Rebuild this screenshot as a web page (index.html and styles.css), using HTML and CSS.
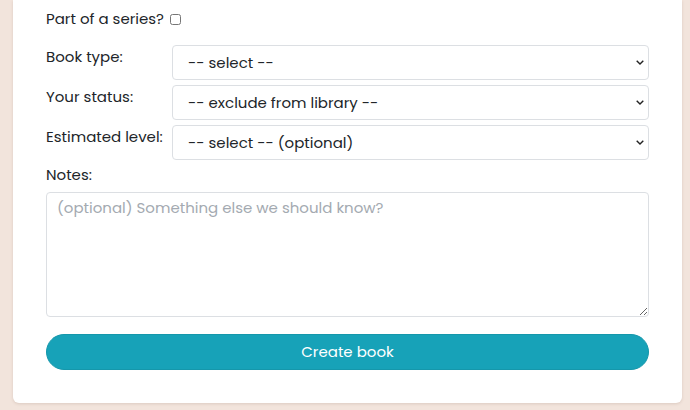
FILE: index.html
```html
<!DOCTYPE html>
<html lang="en">
<head>
    <meta charset="UTF-8">
    <meta name="viewport" content="width=device-width, initial-scale=1.0">
    <title>New book</title>
    <link rel="stylesheet" href="styles.css">
</head>
<body>
    <div class="page">
        <form class="book-card">
            <label class="series-row">
                Part of a series?
                <input type="checkbox" class="series-check">
            </label>

            <div class="field-grid">
                <label class="field-label" for="book-type">Book type:</label>
                <select id="book-type" class="form-select">
                    <option>-- select --</option>
                </select>

                <label class="field-label" for="status">Your status:</label>
                <select id="status" class="form-select">
                    <option>-- exclude from library --</option>
                </select>

                <label class="field-label" for="level">Estimated level:</label>
                <select id="level" class="form-select">
                    <option>-- select -- (optional)</option>
                </select>
            </div>

            <label class="notes-label" for="notes">Notes:</label>
            <textarea id="notes" class="form-textarea" placeholder="(optional) Something else we should know?"></textarea>

            <button type="submit" class="btn-create">Create book</button>
        </form>
    </div>
</body>
</html>
```

FILE: styles.css
```css
:root {
    --page-bg: #f2e4dc;
    --card-bg: #ffffff;
    --text-color: #212529;
    --border-color: #dcdfe3;
    --accent: #17a2b8;
}

* {
    margin: 0;
    padding: 0;
    box-sizing: border-box;
}

body {
    background: var(--page-bg);
    font-family: Poppins, "Open Sans", "Noto Sans", sans-serif;
    font-size: 15px;
    line-height: 24px;
    color: var(--text-color);
}

.page {
    padding: 0 8px 7px 13px;
}

.book-card {
    background: var(--card-bg);
    border-radius: 0 0 6px 6px;
    box-shadow: 0 1px 3px rgba(120, 90, 70, 0.18);
    padding: 7px 33px 33px;
    display: flex;
    flex-direction: column;
}

.series-row {
    display: flex;
    align-items: center;
    gap: 6px;
    margin-bottom: 14px;
}

.series-check {
    width: 11px;
    height: 11px;
    margin: 1px 0 0;
}

.field-grid {
    display: grid;
    grid-template-columns: 126px 1fr;
    row-gap: 5px;
}

.field-label {
    white-space: nowrap;
}

/* small dark chevron on the right, like the browser default */
.form-select {
    appearance: none;
    height: 35px;
    padding: 0 24px 0 15px;
    border: 1px solid var(--border-color);
    border-radius: 4px;
    background: var(--card-bg) url("data:image/svg+xml,%3Csvg xmlns='http://www.w3.org/2000/svg' width='8' height='5' viewBox='0 0 8 5'%3E%3Cpath d='M0.7 0.7 L4 4 L7.3 0.7' fill='none' stroke='%23222' stroke-width='1.4'/%3E%3C/svg%3E") no-repeat right 4px center;
    font: inherit;
    color: var(--text-color);
}

.notes-label {
    margin-top: 3px;
}

.form-textarea {
    margin-top: 5px;
    height: 125px;
    padding: 3px 10px;
    border: 1px solid var(--border-color);
    border-radius: 4px;
    font: inherit;
    color: var(--text-color);
}

.form-textarea::placeholder {
    color: #a4aab1;
}

.btn-create {
    margin-top: 17px;
    height: 36px;
    border: 1px solid #1597ab;
    border-radius: 18px;
    background: var(--accent);
    color: #ffffff;
    font: inherit;
    cursor: pointer;
}
```
